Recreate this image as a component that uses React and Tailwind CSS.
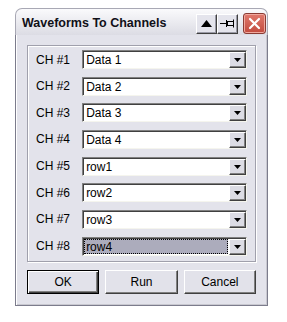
import React from "react";

const rows = [
  ["CH #1", "Data 1"],
  ["CH #2", "Data 2"],
  ["CH #3", "Data 3"],
  ["CH #4", "Data 4"],
  ["CH #5", "row1"],
  ["CH #6", "row2"],
  ["CH #7", "row3"],
  ["CH #8", "row4"],
];

function Combo({ value, selected }) {
  return (
    <div className="flex h-[19px] w-[168px] border-t border-l border-[#808080] border-r border-b border-r-[#f5f5ee] border-b-[#f5f5ee] bg-white shadow-[inset_1px_1px_0_#404040]">
      <div className="flex flex-1 items-center pl-[1px] pt-[1px]">
        {selected ? (
          <div className="flex h-[15px] flex-1 items-center border border-dotted border-black bg-[#acacbc] pl-[1px] text-[12px] leading-none text-black">
            {value}
          </div>
        ) : (
          <div className="pl-[2px] text-[12px] leading-none text-black">{value}</div>
        )}
      </div>
      <div className="mt-[1px] ml-[1px] flex h-[16px] w-[17px] items-center justify-center border-t border-l border-white border-r border-b border-r-[#404040] border-b-[#404040] bg-[#dcdce4] shadow-[inset_-1px_-1px_0_#808080]">
        <svg width="7" height="4" viewBox="0 0 7 4">
          <polygon points="0,0 7,0 3.5,4" fill="#000" />
        </svg>
      </div>
    </div>
  );
}

function Btn({ children, isDefault }) {
  return (
    <div
      className={
        "flex h-[24px] w-[75px] items-center justify-center bg-[#e2e2ea] text-[12px] text-black " +
        (isDefault
          ? "border border-black shadow-[inset_1px_1px_0_#ffffff,inset_-1px_-1px_0_#404040,inset_-2px_-2px_0_#808080]"
          : "border-t border-l border-white border-r border-b border-r-[#404040] border-b-[#404040] shadow-[inset_-1px_-1px_0_#808080]")
      }
    >
      {children}
    </div>
  );
}

function TitleBtn({ children }) {
  return (
    <div className="flex h-[20px] w-[21px] items-center justify-center border-t border-l border-white border-r border-b border-r-[#404040] border-b-[#404040] bg-[#e4e4ec] shadow-[inset_-1px_-1px_0_#9a9aa6]">
      {children}
    </div>
  );
}

export default function App() {
  return (
    <div
      className="h-[322px] w-[287px] bg-white pl-[15px] pt-[8px]"
      style={{ fontFamily: '"Liberation Sans", Arial, sans-serif' }}
    >
      <div className="w-[253px]">
        {/* Title bar */}
        <div className="flex h-[27px] items-center rounded-t-[7px] border border-b-0 border-[#a8a8b4] bg-gradient-to-b from-[#fafafc] to-[#dcdce4] pl-[6px] pr-[1px]">
          <div className="mt-[3px] flex-1 text-[12.5px] font-bold text-[#101018]">Waveforms To Channels</div>
          <div className="mt-[3px] flex items-center">
            <TitleBtn>
              <svg width="11" height="7" viewBox="0 0 11 7">
                <polygon points="0,7 11,7 5.5,0" fill="#000" />
              </svg>
            </TitleBtn>
            <TitleBtn>
              <svg width="15" height="9" viewBox="0 0 15 9">
                <line x1="0" y1="4.5" x2="6" y2="4.5" stroke="#000" strokeWidth="1" />
                <line x1="6.5" y1="1" x2="6.5" y2="8" stroke="#000" strokeWidth="1" />
                <rect x="7.5" y="2.5" width="6" height="4" fill="none" stroke="#000" strokeWidth="1" />
                <line x1="13.5" y1="0.5" x2="13.5" y2="8.5" stroke="#000" strokeWidth="1" />
              </svg>
            </TitleBtn>
            <div className="ml-[5px] flex h-[21px] w-[23px] items-center justify-center rounded-[3px] border border-[#8a3b34] bg-gradient-to-b from-[#e07a6e] to-[#c24a3e] shadow-[inset_0_0_0_1px_#f0a89e]">
              <svg width="13" height="13" viewBox="0 0 13 13">
                <line x1="2" y1="2" x2="11" y2="11" stroke="#fff" strokeWidth="2.2" strokeLinecap="round" />
                <line x1="11" y1="2" x2="2" y2="11" stroke="#fff" strokeWidth="2.2" strokeLinecap="round" />
              </svg>
            </div>
          </div>
        </div>
        {/* Body */}
        <div className="border-l border-r border-b border-[#7c7c8c] shadow-[inset_1px_0_0_#ffffff,inset_-1px_0_0_#c8c8d0,inset_0_-1px_0_#c8c8d0]">
          <div className="m-[1px] mt-0 bg-[#e3e3eb] px-[10px] pt-[10px] pb-[10px]">
            <div className="flex flex-col gap-[7.67px] border border-[#a0a0ac] px-[8px] pt-[4px] pb-[5px] shadow-[inset_1px_1px_0_#ffffff,1px_1px_0_#ffffff]">
              {rows.map(([label, value], i) => (
                <div key={label} className="flex items-center">
                  <div className="w-[47px] text-[12px] leading-none text-black">{label}</div>
                  <Combo value={value} selected={i === 7} />
                </div>
              ))}
            </div>
            <div className="mt-[8px] flex gap-[6px]">
              <Btn isDefault>OK</Btn>
              <Btn>Run</Btn>
              <Btn>Cancel</Btn>
            </div>
          </div>
        </div>
      </div>
    </div>
  );
}
